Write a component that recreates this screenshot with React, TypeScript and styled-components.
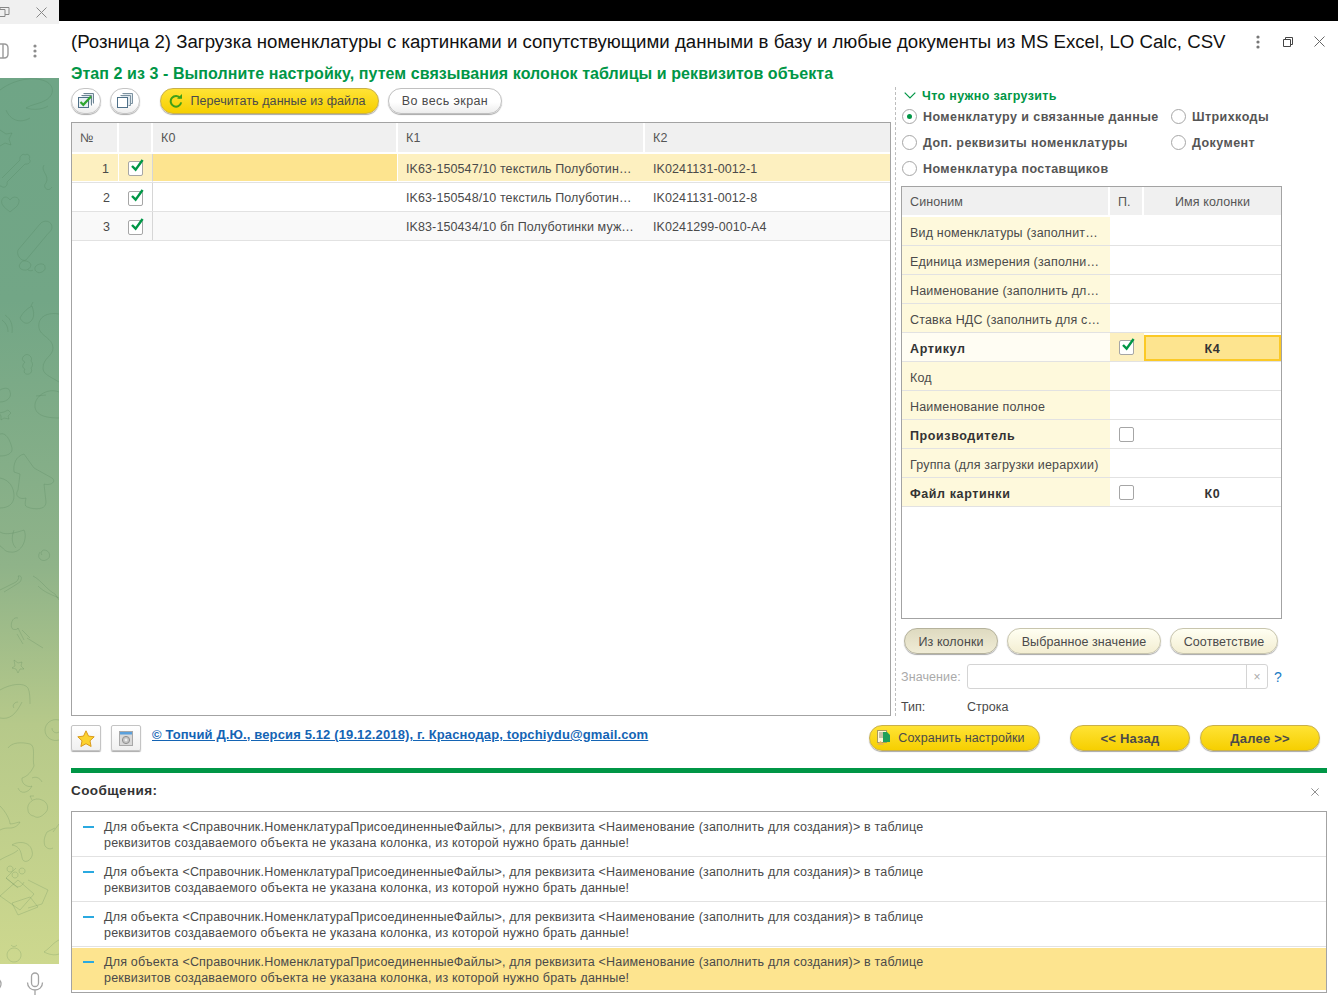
import React from 'react'
import styled, { createGlobalStyle } from 'styled-components'

const GlobalStyle = createGlobalStyle`
  html, body {
    margin: 0;
    padding: 0;
    background: #fff;
    overflow: hidden;
  }
  * {
    box-sizing: border-box;
  }
`

const Page = styled.div`
  display: flex;
  width: 1338px;
  height: 1004px;
  overflow: hidden;
  font-family: 'Liberation Sans', Arial, sans-serif;
  font-size: 12.5px;
  color: #4a4a4a;
`

/* левая полоса, кусок окна мессенджера */
const Sidebar = styled.aside`
  display: flex;
  flex-direction: column;
  width: 59px;
  flex: none;
`

const SideTitle = styled.div`
  display: flex;
  align-items: center;
  justify-content: space-between;
  height: 24px;
  padding-right: 12px;
  background: #f0f0f0;
`

const SideTools = styled.div`
  display: flex;
  align-items: center;
  justify-content: space-between;
  height: 54px;
  padding-right: 22px;
  background: #fff;
`

const Wallpaper = styled.div`
  flex: 1;
  overflow: hidden;
  background: linear-gradient(180deg, #6fa586 0%, #72a686 25%, #8fb389 55%, #b6c98a 73%, #cdd88e 100%);
  svg {
    display: block;
  }
`

const SideBottom = styled.div`
  display: flex;
  align-items: center;
  justify-content: space-between;
  height: 40px;
  padding-right: 15px;
  background: #fff;
`

const Main = styled.main`
  display: flex;
  flex-direction: column;
  flex: 1;
  min-width: 0;
`

const BlackStrip = styled.div`
  height: 21px;
  background: #000;
`

const Window = styled.div`
  display: flex;
  flex-direction: column;
  flex: 1;
  padding: 0 11px 0 12px;
`

const TitleRow = styled.div`
  display: flex;
  align-items: center;
  height: 41px;
`

const Title = styled.h1`
  flex: 1;
  margin: 0;
  font-size: 18.65px;
  font-weight: 400;
  color: #111;
  white-space: nowrap;
`

const WindowIcons = styled.div`
  display: flex;
  align-items: center;
  gap: 23px;
  margin-right: 2px;
  svg:last-child {
    margin-left: -2px;
  }
`

const StepTitle = styled.div`
  height: 22px;
  padding-top: 1px;
  font-size: 16px;
  line-height: 22px;
  font-weight: 700;
  letter-spacing: 0.07px;
  color: #009646;
  white-space: nowrap;
`

const Body = styled.div`
  display: flex;
  height: 629px;
  margin-top: 3px;
`

const LeftPane = styled.section`
  display: flex;
  flex-direction: column;
  width: 820px;
  flex: none;
`

const Toolbar = styled.div`
  display: flex;
  align-items: center;
  height: 27px;
  margin-bottom: 8px;
`

const Gap = styled.span<{ $w: number }>`
  width: ${(p) => p.$w}px;
  flex: none;
`

const RoundButton = styled.button`
  display: flex;
  align-items: center;
  justify-content: center;
  width: 30px;
  height: 26px;
  padding: 0;
  flex: none;
  border: 1px solid #c4c4c4;
  border-radius: 13px;
  background: linear-gradient(180deg, #fff 0%, #fff 55%, #ececec 100%);
  box-shadow: 0 1px 1px #aaa;
`

const Pill = styled.button<{
  $kind?: 'yellow' | 'white' | 'cream' | 'pressed'
  $width: number
  $bold?: boolean
  $right?: number
  $track?: number
}>`
  display: flex;
  align-items: center;
  justify-content: center;
  gap: 7px;
  flex: none;
  width: ${(p) => p.$width}px;
  height: 26px;
  padding: 0 ${(p) => p.$right || 0}px 0 0;
  border-radius: 13px;
  font-family: inherit;
  font-size: ${(p) => (p.$bold ? '13px' : '12.5px')};
  font-weight: ${(p) => (p.$bold ? 700 : 400)};
  letter-spacing: ${(p) => p.$track ?? (p.$bold ? 0.2 : 0.08)}px;
  white-space: nowrap;
  color: #4a4a4a;
  border: 1px solid
    ${(p) =>
      p.$kind === 'yellow'
        ? '#c9b04a'
        : p.$kind === 'white'
        ? '#c0c0c0'
        : p.$kind === 'pressed'
        ? '#b5b29c'
        : '#c8c5ae'};
  background: ${(p) =>
    p.$kind === 'yellow'
      ? 'linear-gradient(180deg, #ffe335 0%, #f6cf00 100%)'
      : p.$kind === 'white'
      ? 'linear-gradient(180deg, #fff 0%, #fff 55%, #ededed 100%)'
      : p.$kind === 'pressed'
      ? 'linear-gradient(180deg, #dedac0 0%, #f0ecd6 100%)'
      : 'linear-gradient(180deg, #fffff2 0%, #f3eed2 100%)'};
  box-shadow: 0 1px 1px #a8a8a8;
`

const Frame = styled.div<{ $height?: number }>`
  display: flex;
  flex-direction: column;
  flex: ${(p) => (p.$height ? 'none' : 1)};
  height: ${(p) => (p.$height ? `${p.$height}px` : 'auto')};
  border: 1px solid #a3a3a3;
  background: #fff;
`

const SideFrame = styled(Frame)`
  width: 381px;
`

const GridRow = styled.div<{ $cols: string; $height: number; $tint?: string; $line?: boolean }>`
  display: grid;
  grid-template-columns: ${(p) => p.$cols};
  height: ${(p) => p.$height}px;
  background: ${(p) => p.$tint || 'transparent'};
  border-bottom: ${(p) => (p.$line === false ? 'none' : '1px solid #e2e2e2')};
`

const HeadCell = styled.div<{ $center?: boolean; $low?: boolean }>`
  display: flex;
  align-items: center;
  justify-content: ${(p) => (p.$center ? 'center' : 'flex-start')};
  padding: ${(p) => (p.$low ? '2px' : 0)} 8px 0;
  background: #f0f0f0;
  border-right: 2px solid #fff;
  border-bottom: 2px solid #fff;
  color: #555;
  letter-spacing: 0.1px;
  &:last-child {
    border-right: none;
  }
`

const Cell = styled.div<{ $bg?: string; $align?: string; $sep?: boolean; $right?: number; $left?: number }>`
  display: flex;
  align-items: center;
  justify-content: ${(p) => p.$align || 'flex-start'};
  min-width: 0;
  padding: 0 ${(p) => p.$right ?? 8}px 0 ${(p) => p.$left ?? 8}px;
  background: ${(p) => p.$bg || 'transparent'};
  letter-spacing: 0.1px;
  white-space: nowrap;
  border-right: ${(p) => (p.$sep ? '1px solid #d6d6d6' : 'none')};
`

// ячейка основной таблицы: текст чуть ниже середины, у текущей строки белые зазоры
const DataCell = styled(Cell)<{ $current?: boolean; $split?: boolean }>`
  padding-top: 2px;
  border-bottom: ${(p) => (p.$current ? '1px solid #fff' : 'none')};
  ${(p) => (p.$current && p.$split ? 'border-right: 1px solid #fff;' : '')}
`

const AttrText = styled.span<{ $bold?: boolean }>`
  padding-top: 4px;
  white-space: nowrap;
  font-weight: ${(p) => (p.$bold ? 700 : 400)};
  letter-spacing: ${(p) => (p.$bold ? '0.6px' : '0.18px')};
  color: ${(p) => (p.$bold ? '#333' : '#4a4a4a')};
`

const ActiveCell = styled(Cell)`
  justify-content: center;
  margin: 2px 0 0;
  padding: 0;
  background: #fde48f;
  border: 2px solid #fbc926;
  ${AttrText} {
    padding-top: 1px;
  }
`

const Box = styled.span`
  position: relative;
  display: block;
  width: 15px;
  height: 15px;
  background: #fff;
  border: 1px solid #a6a6a6;
  border-radius: 2px;
  svg {
    position: absolute;
    left: 1px;
    top: -4px;
  }
`

const Divider = styled.div`
  width: 0;
  margin: 0 5px 0 4px;
  border-left: 1px dashed #bdbdbd;
`

const RightPane = styled.section`
  display: flex;
  flex-direction: column;
  flex: 1;
  min-width: 0;
`

const GroupHead = styled.div`
  display: flex;
  align-items: center;
  gap: 6px;
  height: 16px;
  padding: 1px 0 0 3px;
  font-weight: 700;
  letter-spacing: 0.35px;
  color: #009646;
`

const RadioGrid = styled.div`
  display: grid;
  grid-template-columns: 269px 1fr;
  grid-auto-rows: 26px;
  margin-bottom: 5px;
`

const RadioItem = styled.label<{ $wide?: boolean }>`
  display: flex;
  align-items: center;
  gap: 6px;
  padding-left: 1px;
  font-weight: 700;
  letter-spacing: 0.43px;
  white-space: nowrap;
  color: #555;
  grid-column: ${(p) => (p.$wide ? '1 / 3' : 'auto')};
`

const RadioText = styled.span`
  padding-top: 2px;
`

const Radio = styled.span<{ $on?: boolean }>`
  display: flex;
  align-items: center;
  justify-content: center;
  width: 15px;
  height: 15px;
  flex: none;
  border: 1px solid #a6a6a6;
  border-radius: 50%;
  background: #fff;
  &::after {
    content: '';
    display: ${(p) => (p.$on ? 'block' : 'none')};
    width: 5px;
    height: 5px;
    border-radius: 50%;
    background: #009646;
  }
`

const ModeRow = styled.div`
  display: flex;
  gap: 9px;
  margin: 9px 0 0 3px;
  button {
    padding-top: 2px;
  }
`

const ValueRow = styled.div`
  display: flex;
  align-items: center;
  height: 25px;
  margin-top: 10px;
`

const ValueLabel = styled.span`
  width: 66px;
  letter-spacing: 0.1px;
  color: #aaa;
`

const ValueInput = styled.div`
  display: flex;
  justify-content: flex-end;
  width: 301px;
  height: 25px;
  border: 1px solid #d4d4d4;
  border-radius: 3px;
  background: #fff;
`

const ClearPart = styled.div`
  display: flex;
  align-items: center;
  justify-content: center;
  width: 21px;
  border-left: 1px solid #d4d4d4;
  color: #aaa;
  font-size: 12px;
`

const Help = styled.span`
  margin-left: 6px;
  font-size: 14px;
  color: #1b7cc4;
`

const TypeRow = styled.div`
  display: flex;
  align-items: center;
  height: 19px;
  margin-top: 8px;
`

const TypeLabel = styled.span`
  width: 66px;
`

const FooterRow = styled.div`
  display: flex;
  align-items: flex-start;
  height: 26px;
  margin-top: 9px;
  padding-right: 7px;
`

const SquareButton = styled.button`
  display: flex;
  align-items: center;
  justify-content: center;
  width: 30px;
  height: 26px;
  padding: 0;
  flex: none;
  border: 1px solid #c4c4c4;
  border-radius: 2px;
  background: linear-gradient(180deg, #fff 0%, #f0f0f0 100%);
  box-shadow: 0 1px 1px #aaa;
`

const AuthorLink = styled.a`
  flex: 1;
  height: 18px;
  margin-left: 11px;
  padding-top: 1px;
  line-height: 18px;
  font-size: 13px;
  font-weight: 700;
  letter-spacing: 0.13px;
  color: #1464b4;
  text-decoration: underline;
  white-space: nowrap;
`

const GreenBar = styled.div`
  height: 5px;
  margin-top: 17px;
  background: #009646;
`

const MessagesHead = styled.div`
  display: flex;
  align-items: center;
  justify-content: space-between;
  height: 38px;
  padding: 0 8px 4px 0;
  font-size: 13.5px;
  font-weight: 700;
  letter-spacing: 0.4px;
  color: #333;
  svg {
    margin-top: 4px;
  }
`

const MessagesBox = styled.div`
  display: flex;
  flex-direction: column;
  height: 182px;
  border: 1px solid #a3a3a3;
`

const Message = styled.div<{ $active?: boolean }>`
  display: flex;
  height: ${(p) => (p.$active ? 42 : 45)}px;
  margin-top: ${(p) => (p.$active ? 1 : 0)}px;
  padding: ${(p) => (p.$active ? 6 : 7)}px 0 0 11px;
  border-bottom: ${(p) => (p.$active ? 'none' : '1px solid #e2e2e2')};
  background: ${(p) => (p.$active ? '#fde48f' : '#fff')};
  line-height: 16px;
  letter-spacing: 0.19px;
  color: #4a4a4a;
`

const Dash = styled.span`
  width: 11px;
  height: 2px;
  flex: none;
  margin: 7px 10px 0 0;
  background: #2aa9e0;
`

const MessageText = styled.div`
  white-space: nowrap;
`

const Dots = ({ color = '#777' }: { color?: string }) => (
  <svg width="4" height="16" viewBox="0 0 4 16">
    <circle cx="2" cy="3" r="1.6" fill={color} />
    <circle cx="2" cy="8" r="1.6" fill={color} />
    <circle cx="2" cy="13" r="1.6" fill={color} />
  </svg>
)

const Cross = ({ size = 11, color = '#666' }: { size?: number; color?: string }) => (
  <svg width={size} height={size} viewBox="0 0 11 11">
    <path d="M.5.5l10 10M10.5.5l-10 10" stroke={color} strokeWidth="1" fill="none" />
  </svg>
)

const Restore = ({ color = '#444' }: { color?: string }) => (
  <svg width="10" height="10" viewBox="0 0 10 10">
    <path d="M.5 2.5h7v7h-7zM2.5 2.5v-2h7v7h-2" stroke={color} fill="none" />
  </svg>
)

const Check = () => (
  <svg width="15" height="15" viewBox="0 0 15 15">
    <path d="M2 8l3.6 3.6L12.6 2" stroke="#009646" strokeWidth="2.4" fill="none" />
  </svg>
)

const CheckBox = ({ on }: { on?: boolean }) => <Box>{on && <Check />}</Box>

const SelectAllIcon = () => (
  <svg width="16" height="15" viewBox="0 0 16 15">
    <path d="M5.5.5h10v10M3.5 2.5h10v10" fill="#dfe8ee" stroke="#6d8493" />
    <rect x=".5" y="4.5" width="10" height="10" fill="#e8eff4" stroke="#4f7088" />
    <path d="M2.5 9l2.8 2.8L13 3.5" stroke="#2fa52f" strokeWidth="2.2" fill="none" />
  </svg>
)

const CopyIcon = () => (
  <svg width="16" height="15" viewBox="0 0 16 15">
    <path d="M5.5.5h10v10h-2M3.5 2.5h10v10h-2" fill="#dfe8ee" stroke="#7d92a0" />
    <rect x=".5" y="4.5" width="10" height="10" fill="#fff" stroke="#4f7088" />
  </svg>
)

const RefreshIcon = () => (
  <svg width="14" height="14" viewBox="0 0 14 14">
    <path d="M11.3 4.2A5.3 5.3 0 1 0 12.2 8.4" stroke="#3f9f18" strokeWidth="2" fill="none" />
    <path d="M8 4.8h5V0z" fill="#3f9f18" />
  </svg>
)

const StarIcon = () => (
  <svg width="18" height="17" viewBox="0 0 18 17">
    <path
      d="M9 .8l2.5 5.3 5.7.7-4.2 4 1.1 5.7L9 13.7l-5.1 2.8L5 10.8.8 6.8l5.7-.7z"
      fill="#fcd22e"
      stroke="#d99a1c"
    />
  </svg>
)

const SettingsIcon = () => (
  <svg width="14" height="15" viewBox="0 0 14 15">
    <rect x=".5" y=".5" width="13" height="14" fill="#d9d9d9" stroke="#a8a8a8" />
    <rect x="1" y="1" width="12" height="2.5" fill="#5aa0dc" />
    <circle cx="7" cy="9" r="3.6" fill="#c4c4c4" stroke="#8f8f8f" />
    <circle cx="7" cy="9" r="1.4" fill="#ededed" />
  </svg>
)

const SaveIcon = () => (
  <svg width="15" height="16" viewBox="0 0 15 16">
    <rect x="1.5" y=".5" width="9" height="12" fill="#fff8d8" stroke="#a89a60" />
    <path d="M3 3h5M3 5h5M3 7h4" stroke="#8a8a70" />
    <path d="M7 2h4l3 3v7H7z" fill="#1fa05a" />
    <path d="M1 15l3.5-4L8 15z" fill="#e9b44c" />
  </svg>
)

const ChevronDown = () => (
  <svg width="12" height="7" viewBox="0 0 12 7">
    <path d="M.7.7L6 6l5.3-5.3" stroke="#009646" strokeWidth="1.2" fill="none" />
  </svg>
)

const Mic = () => (
  <svg width="18" height="24" viewBox="0 0 18 24">
    <rect x="5.5" y="1" width="7" height="13.5" rx="3.5" stroke="#a3a3a3" strokeWidth="1.3" fill="none" />
    <path d="M1.5 10.5c0 10 15 10 15 0M9 18v5" stroke="#a3a3a3" strokeWidth="1.3" fill="none" />
  </svg>
)

// обои чата: контурные рисунки, координаты как на странице
const doodles = [
  'M0 90c10-8 28-14 42-10 12 3 14 14 4 20-6 4-14 4-20 8 6 2 16 2 22-2M6 110c4 10 14 14 24 8',
  'M0 130l6 4 6-1-3 6 2 6-6-2-5 3',
  'M2 178l18-18c-1-4 3-7 5-5 3-2 6 1 4 4 3 2 0 6-4 5l-18 18c1 4-3 7-6 4-3 1-5-3-3-5',
  'M10 200c-4-6-10-2-8 4 2 4 6 6 8 8 3-3 8-5 9-10 1-5-6-7-9-2z',
  'M44 165c-4 6 6 10 2 18-4 4 2 10 6 4',
  'M18 250l22-26c4-5 12-3 12 3 0 4-4 6-6 9l-20 24c-4 2-10-4-8-10z',
  'M20 264c2-5 8-3 10-1 3 4-3 8-6 7-3 0-6-3-4-6zM36 266c3-3 9-3 9 1 1 4-5 7-8 5-2-1-3-4-1-6z',
  'M28 270c2 1 4 1 5 0',
  'M20 318c3-6 8-10 12-12 2 6 3 12-2 16-4 3-8 0-10-4zM31 306l2-4',
  'M5 315c6 4 8 10 7 18M2 320c4 3 6 7 6 12',
  'M59 314c-10-2-22 2-20 14 1 8 14 10 14 20 0 8-10 10-10 20 0 6 6 8 16 14',
  'M25 355c-4 3-3 6 0 7-3 3-3 6 0 7-2 3 0 6 4 5 3-1 3-4 2-6 2-2 2-5 0-7 2-3-2-8-6-6z',
  'M0 390c5-3 10-2 10 2 2 4-2 10-10 10M4 412l4-2 3 3-3 3 1 3-5-1-3 2 0-4-2-3z',
  'M59 392c-10-4-22 2-24 12-1 10 8 14 24 14M36 396l10-1',
  'M0 434c6-2 10 6 12 14 1 6-6 8-12 8',
  'M24 454l10 14 18 10c5 4-2 8-8 6l2 18c0 6-6 8-16 6-4-2-6 0-4-10-6 2-12-2-8-8l2-16-6-2c-1-8 2-16 10-18z',
  'M0 478c10 2 14 10 14 18 0 8-6 12-14 12',
  'M0 532c6 4 18 0 24-2 4 8-2 24-14 22-6 0-8-6-10-6M14 530c-3 8-2 14 2 18',
  'M40 552c-4 6 2 10 6 8 6-2 4-10-2-10-2 0-4 3-2 5',
  'M0 590l16-8c3-3 3-5 2-6 4-1 4 3 2 6-3 2-6 4-16 10',
  'M33 576c8 4 14 14 22 18l4 6M38 586c6 6 12 8 21 12',
  'M18 618c-6-2-8 8-6 10 0 2 6 2 6 0l6 12M22 630l8 8M17 634l6 10M27 638l16 10',
  'M14 660l4 3 4-1-1 4 3 3-4 0-2 4-2-4-4-1 3-2z',
  'M0 690c10-6 24-8 28-2 2 4 2 12 2 16',
  'M0 718c10 2 16-4 22-16M18 702c-4 0-6 4-4 6',
  'M59 720c-8-2-14 4-14 10 0 8 8 12 14 10M52 728c0 4 4 6 7 4',
  'M8 748c4-6 14-6 22-4 6 2 2 14 4 22-3 6-6 10-12 12-1 6 6 10 10 8-4 8-12 8-14 2M32 778c4-2 8 0 10 4',
  'M28 810c-2-6 6-14 14-10 6 2 8 10 2 14-4 4-8 4-10 2-2 0-6-2-6-6zM32 800l-2-4 4 0',
  'M0 806c6 6 10 14 10 18 4 0 8-2 10-2-2 4-6 6-10 6-4 0-6 0-10 2',
  'M0 860c6-4 14-6 18-10M12 845c6-4 18-4 20 6 2 6-4 12-8 10-4-2 0-14-12-16z',
  'M55 828l-8 4c-2 4-4 8-2 14 2 2 4 4 8 2M59 824l-6 8',
  'M6 878l10 8c3 2 6 0 8-4M18 888l-12-10 10-10',
  'M0 896l20 14 14-16-16-14zM28 880l20 10-6 14-14 4',
  'M12 903l18-6 8 10-20 8zM15 872a3 3 0 1 0 .1 0M22 868a3 3 0 1 0 .1 0M10 866a3 3 0 1 0 .1 0',
  'M14 948a7 7 0 1 0 .1 0M11 945c2 2 4 2 6 0',
  'M44 952c6-4 10-10 15-12M44 952c4 2 10 4 15 2',
]

const Doodles = () => (
  <svg width="59" height="886" viewBox="0 78 59 886">
    <g fill="none" stroke="#3f6f46" strokeOpacity="0.18" strokeWidth="1">
      {doodles.map((d) => (
        <path key={d} d={d} />
      ))}
    </g>
  </svg>
)

const mainCols = '47px 34px 245px 247px 1fr'
const sideCols = '208px 34px 1fr'

const tableRows = [
  { n: 1, k1: 'IK63-150547/10 текстиль Полуботин…', k2: 'IK0241131-0012-1' },
  { n: 2, k1: 'IK63-150548/10 текстиль Полуботин…', k2: 'IK0241131-0012-8' },
  { n: 3, k1: 'IK83-150434/10 бп Полуботинки муж…', k2: 'IK0241299-0010-A4' },
]

const attributes = [
  { name: 'Вид номенклатуры (заполнит…' },
  { name: 'Единица измерения (заполни…' },
  { name: 'Наименование (заполнить дл…' },
  { name: 'Ставка НДС (заполнить для с…' },
  { name: 'Артикул', bold: true, box: true, on: true, column: 'К4', active: true },
  { name: 'Код' },
  { name: 'Наименование полное' },
  { name: 'Производитель', bold: true, box: true },
  { name: 'Группа (для загрузки иерархии)' },
  { name: 'Файл картинки', bold: true, box: true, column: 'К0' },
]

const App = () => {
  return (
    <Page>
      <GlobalStyle />
      <Sidebar>
        <SideTitle>
          <svg width="11" height="10" viewBox="0 0 11 10">
            <path d="M-3 2.5h8v7h-8zM0 2.5V.5h9v7H5" stroke="#888" fill="none" />
          </svg>
          <Cross size={11} color="#888" />
        </SideTitle>
        <SideTools>
          <svg width="9" height="16" viewBox="0 0 9 16">
            <path d="M-6 1h10c3 0 4 2 4 4v6c0 2-1 4-4 4H-6M3 1v14" stroke="#9a9a9a" strokeWidth="1.4" fill="none" />
          </svg>
          <Dots color="#8c8c8c" />
        </SideTools>
        <Wallpaper>
          <Doodles />
        </Wallpaper>
        <SideBottom>
          <svg width="3" height="14" viewBox="0 0 3 14">
            <path d="M-5 1a6 6 0 0 1 6 6 6 6 0 0 1-6 6" stroke="#a3a3a3" strokeWidth="1.3" fill="none" />
          </svg>
          <Mic />
        </SideBottom>
      </Sidebar>

      <Main>
        <BlackStrip />
        <Window>
          <TitleRow>
            <Title>
              (Розница 2) Загрузка номенклатуры с картинками и сопутствующими данными в базу и любые документы из MS Excel, LO Calc, CSV
            </Title>
            <WindowIcons>
              <Dots />
              <Restore />
              <Cross size={11} />
            </WindowIcons>
          </TitleRow>
          <StepTitle>Этап 2 из 3 - Выполните настройку, путем связывания колонок таблицы и реквизитов объекта</StepTitle>

          <Body>
            <LeftPane>
              <Toolbar>
                <RoundButton>
                  <SelectAllIcon />
                </RoundButton>
                <Gap $w={9} />
                <RoundButton>
                  <CopyIcon />
                </RoundButton>
                <Gap $w={20} />
                <Pill $kind="yellow" $width={219} $right={4}>
                  <RefreshIcon />
                  Перечитать данные из файла
                </Pill>
                <Gap $w={9} />
                <Pill $kind="white" $width={114} $track={0.4}>
                  Во весь экран
                </Pill>
              </Toolbar>

              <Frame>
                <GridRow $cols={mainCols} $height={31} $line={false}>
                  <HeadCell>№</HeadCell>
                  <HeadCell />
                  <HeadCell>К0</HeadCell>
                  <HeadCell>К1</HeadCell>
                  <HeadCell>К2</HeadCell>
                </GridRow>
                {tableRows.map((row, i) => {
                  const current = i === 0
                  const light = current ? '#fdf0c0' : undefined
                  return (
                    <GridRow key={row.n} $cols={mainCols} $height={29} $tint={i === 2 ? '#f9f9f9' : undefined}>
                      <DataCell $bg={light} $align="flex-end" $right={9} $current={current} $split>
                        {row.n}
                      </DataCell>
                      <DataCell $bg={light} $align="center" $sep $current={current}>
                        <CheckBox on />
                      </DataCell>
                      <DataCell $bg={current ? '#fde48f' : undefined} $current={current} $split />
                      <DataCell $bg={light} $current={current}>
                        {row.k1}
                      </DataCell>
                      <DataCell $bg={light} $current={current}>
                        {row.k2}
                      </DataCell>
                    </GridRow>
                  )
                })}
              </Frame>
            </LeftPane>

            <Divider />

            <RightPane>
              <GroupHead>
                <ChevronDown />
                Что нужно загрузить
              </GroupHead>
              <RadioGrid>
                <RadioItem>
                  <Radio $on />
                  <RadioText>Номенклатуру и связанные данные</RadioText>
                </RadioItem>
                <RadioItem>
                  <Radio />
                  <RadioText>Штрихкоды</RadioText>
                </RadioItem>
                <RadioItem>
                  <Radio />
                  <RadioText>Доп. реквизиты номенклатуры</RadioText>
                </RadioItem>
                <RadioItem>
                  <Radio />
                  <RadioText>Документ</RadioText>
                </RadioItem>
                <RadioItem $wide>
                  <Radio />
                  <RadioText>Номенклатура поставщиков</RadioText>
                </RadioItem>
              </RadioGrid>

              <SideFrame $height={433}>
                <GridRow $cols={sideCols} $height={30} $line={false}>
                  <HeadCell $low>Синоним</HeadCell>
                  <HeadCell $low>П.</HeadCell>
                  <HeadCell $low $center>
                    Имя колонки
                  </HeadCell>
                </GridRow>
                {attributes.map((attr) => (
                  <GridRow key={attr.name} $cols={sideCols} $height={29}>
                    <Cell $bg={attr.active ? '#fffdf3' : '#fef9dc'}>
                      <AttrText $bold={attr.bold}>{attr.name}</AttrText>
                    </Cell>
                    <Cell $bg={attr.active ? '#fdf0c0' : undefined} $left={9}>
                      {attr.box && <CheckBox on={attr.on} />}
                    </Cell>
                    {attr.active ? (
                      <ActiveCell>
                        <AttrText $bold>{attr.column}</AttrText>
                      </ActiveCell>
                    ) : (
                      <Cell $align="center">
                        <AttrText $bold>{attr.column}</AttrText>
                      </Cell>
                    )}
                  </GridRow>
                ))}
              </SideFrame>

              <ModeRow>
                <Pill $kind="pressed" $width={94}>
                  Из колонки
                </Pill>
                <Pill $kind="cream" $width={154}>
                  Выбранное значение
                </Pill>
                <Pill $kind="cream" $width={108}>
                  Соответствие
                </Pill>
              </ModeRow>

              <ValueRow>
                <ValueLabel>Значение:</ValueLabel>
                <ValueInput>
                  <ClearPart>×</ClearPart>
                </ValueInput>
                <Help>?</Help>
              </ValueRow>

              <TypeRow>
                <TypeLabel>Тип:</TypeLabel>
                Строка
              </TypeRow>
            </RightPane>
          </Body>

          <FooterRow>
            <SquareButton>
              <StarIcon />
            </SquareButton>
            <Gap $w={10} />
            <SquareButton>
              <SettingsIcon />
            </SquareButton>
            <AuthorLink href="#">© Топчий Д.Ю., версия 5.12 (19.12.2018), г. Краснодар, topchiydu@gmail.com</AuthorLink>
            <Pill $kind="yellow" $width={171} $right={8}>
              <SaveIcon />
              Сохранить настройки
            </Pill>
            <Gap $w={30} />
            <Pill $kind="yellow" $width={120} $bold>
              {'<< Назад'}
            </Pill>
            <Gap $w={10} />
            <Pill $kind="yellow" $width={120} $bold>
              {'Далее >>'}
            </Pill>
          </FooterRow>

          <GreenBar />

          <MessagesHead>
            Сообщения:
            <Cross size={8} />
          </MessagesHead>

          <MessagesBox>
            {[0, 1, 2, 3].map((i) => (
              <Message key={i} $active={i === 3}>
                <Dash />
                <MessageText>
                  Для объекта {'<'}Справочник.НоменклатураПрисоединенныеФайлы{'>'}, для реквизита {'<'}Наименование
                  (заполнить для создания){'>'} в таблице
                  <br />
                  реквизитов создаваемого объекта не указана колонка, из которой нужно брать данные!
                </MessageText>
              </Message>
            ))}
          </MessagesBox>
        </Window>
      </Main>
    </Page>
  )
}

export default App
